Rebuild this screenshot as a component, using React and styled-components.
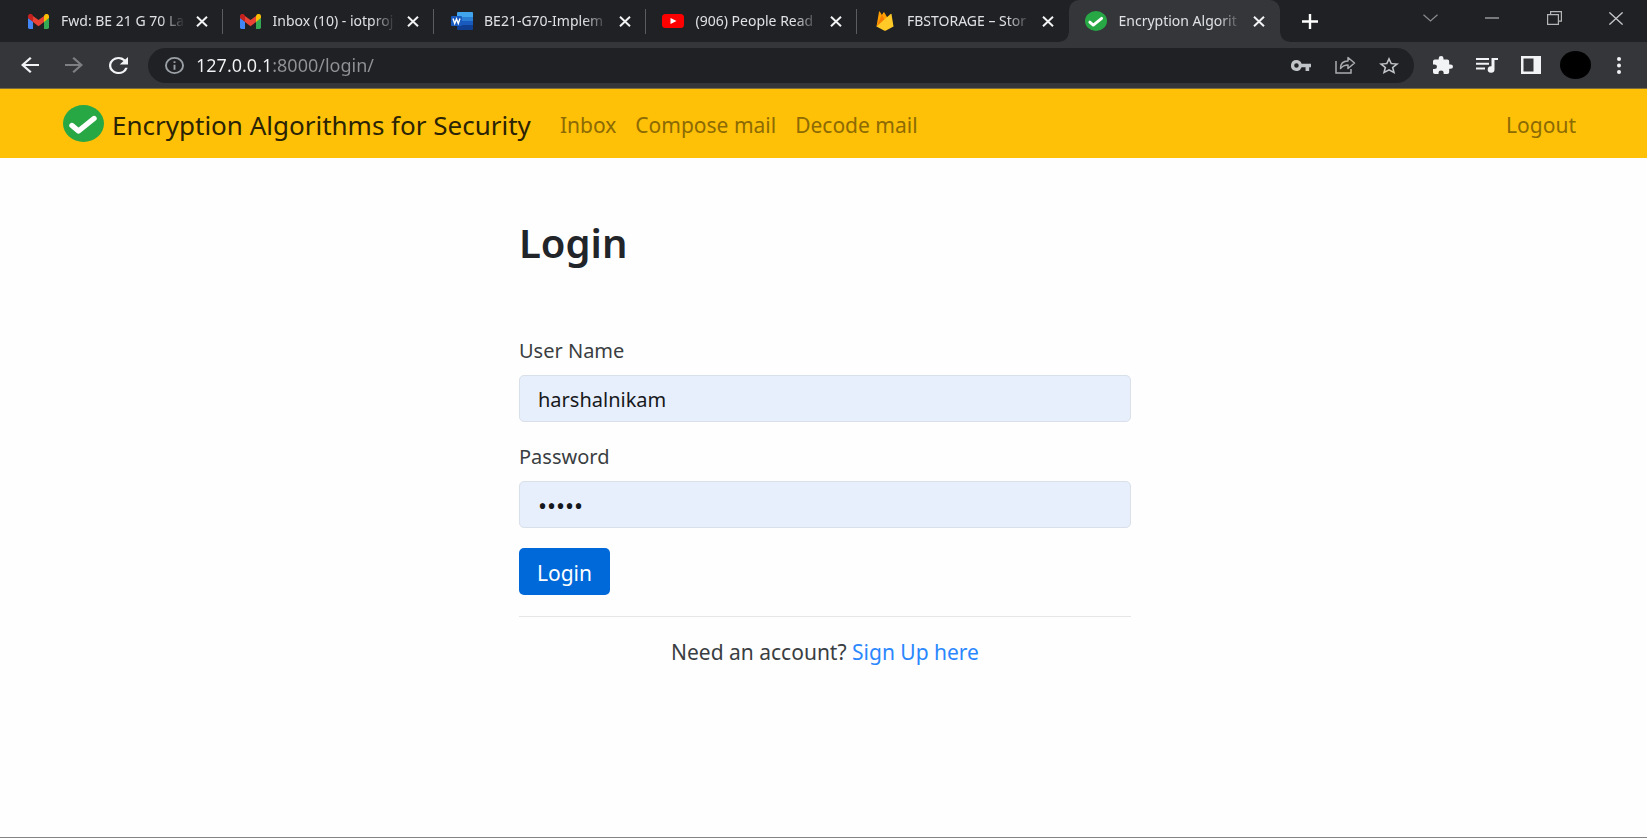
import React from "react";
import styled, { createGlobalStyle, css } from "styled-components";

const GlobalStyle = createGlobalStyle`
  *, *::before, *::after { box-sizing: border-box; }
  body {
    margin: 0;
    background: #fefefe;
    color: #212529;
    font-family: "Noto Sans", "Open Sans", sans-serif;
    font-size: 20px;
    line-height: 30px;
  }
  button, input { font: inherit; }
  button { cursor: pointer; }
`;

const Window = styled.div`
  display: flex;
  flex-direction: column;
  min-height: 100vh;
  border-bottom: 1px solid #848484;
`;

/* Browser frame */

const TabStrip = styled.header`
  display: flex;
  height: 42px;
  padding-left: 11px;
  background: #202124;
`;

const TabList = styled.div`
  display: flex;
  flex: 0 1 1269px;
  min-width: 0;
`;

const Tab = styled.div`
  position: relative;
  display: flex;
  flex: 1 1 0;
  align-items: center;
  min-width: 0;
  padding: 0 10px 0 16px;
  color: #dfe1e5;

  ${(p) =>
    p.$divider &&
    css`
      &::after {
        content: "";
        position: absolute;
        right: 0;
        top: 9px;
        width: 1px;
        height: 25px;
        background: #5a5c60;
      }
    `}

  ${(p) =>
    p.$active &&
    css`
      background: #35363a;
      border-radius: 10px 10px 0 0;
      &::before,
      &::after {
        content: "";
        position: absolute;
        bottom: 0;
        width: 9px;
        height: 9px;
      }
      &::before {
        right: 100%;
        background: radial-gradient(circle at 0 0, transparent 8px, #35363a 9px);
      }
      &::after {
        left: 100%;
        background: radial-gradient(circle at 100% 0, transparent 8px, #35363a 9px);
      }
    `}
`;

const Favicon = styled.span`
  display: flex;
  flex: none;
  justify-content: center;
  width: 23px;
`;

const TabTitle = styled.button`
  flex: 1;
  min-width: 0;
  margin: 0 4px 0 11px;
  padding: 0;
  border: 0;
  overflow: hidden;
  background: none;
  color: inherit;
  font-size: 14px;
  line-height: 20px;
  text-align: left;
  white-space: nowrap;
  mask-image: linear-gradient(90deg, #000 calc(100% - 26px), transparent calc(100% - 2px));
`;

const IconButton = styled.button`
  display: flex;
  flex: none;
  align-items: center;
  justify-content: center;
  width: ${(p) => p.$width || 44}px;
  height: ${(p) => p.$height || 34}px;
  padding: 0;
  border: 0;
  background: none;
  color: ${(p) => p.$color || "#f1f3f4"};
`;

const WindowControls = styled.div`
  display: flex;
  margin-left: auto;
`;

const Toolbar = styled.div`
  display: flex;
  align-items: center;
  height: 47px;
  padding: 0 6px 0 8px;
  background: #35363a;
  border-bottom: 1px solid #7a6a3c;
`;

const Omnibox = styled.div`
  display: flex;
  flex: 1;
  align-items: center;
  height: 35px;
  min-width: 0;
  margin: 0 7px 0 8px;
  padding: 0 3px 0 4px;
  border-radius: 18px;
  background: #202124;
`;

const Address = styled.input`
  flex: 1;
  min-width: 0;
  padding: 0;
  border: 0;
  outline: 0;
  background: linear-gradient(90deg, #f1f3f4 77px, #8f9296 77px);
  background-clip: text;
  color: transparent;
  font-size: 18px;
  line-height: 24px;
`;

const Avatar = styled.span`
  width: 31px;
  height: 28px;
  border-radius: 50%;
  background: #000;
`;

/* Site */

const Navbar = styled.nav`
  display: flex;
  align-items: center;
  height: 69px;
  padding: 0 71px 0 63px;
  background: #ffc107;
`;

const Brand = styled.a`
  display: flex;
  align-items: center;
  gap: 8px;
  margin-right: 29px;
  color: #2b2305;
  font-size: 26px;
  line-height: 36px;
  text-decoration: none;
  white-space: nowrap;
`;

const BrandName = styled.span`
  padding-top: 2px;
`;

const NavLinks = styled.div`
  display: flex;
  flex: 1;
  gap: 19px;
  padding-top: 2px;
  font-size: 21px;
`;

const NavLink = styled.a`
  margin-left: ${(p) => (p.$end ? "auto" : 0)};
  color: #8c6a04;
  text-decoration: none;
  white-space: nowrap;
`;

const Main = styled.main`
  width: 100%;
  max-width: 615px;
  margin: 0 auto;
  padding: 56px 0 0 3px;
`;

const Title = styled.h1`
  margin: 0 0 64px;
  font-size: 40px;
  font-weight: 600;
  line-height: 58px;
`;

const Field = styled.div`
  display: flex;
  flex-direction: column;
  gap: 9px;
  margin-bottom: 20px;
`;

const Label = styled.label`
  color: #3a3e42;
`;

const TextInput = styled.input`
  width: 100%;
  height: 47px;
  padding: 2px 18px 0;
  border: 1px solid #d9e0e9;
  border-radius: 5px;
  outline: 0;
  background: #e8effc;
  color: #16181b;

  &[type="password"] {
    font-size: 24px;
  }
`;

const SubmitButton = styled.button`
  height: 47px;
  padding: 2px 18px 0;
  border: 0;
  border-radius: 5px;
  background: #0069d9;
  color: #fff;
  font-size: 21px;
`;

const Rule = styled.hr`
  margin: 21px 0 20px;
  border: 0;
  border-top: 1px solid #e6e6e6;
`;

const SignUp = styled.p`
  margin: 0;
  color: #3a3e42;
  font-size: 21px;
  text-align: center;

  a {
    color: #2a87ff;
    text-decoration: none;
  }
`;

/* Icons */

const Drawing = styled.svg`
  flex: none;
`;

function Icon({ w, h, box = "0 0 24 24", children, stroke = 0 }) {
  return (
    <Drawing
      width={w}
      height={h}
      viewBox={box}
      preserveAspectRatio="none"
      fill={stroke ? "none" : "currentColor"}
      stroke={stroke ? "currentColor" : "none"}
      strokeWidth={stroke || undefined}
      aria-hidden="true"
    >
      {children}
    </Drawing>
  );
}

const Gmail = () => (
  <Icon w={21} h={15} box="0 0 21 15">
    <path fill="#4285f4" d="M0 4v9.600Q0 15 1.500 15H5V7z" />
    <path fill="#34a853" d="M16 7v8h3.500q1.500 0 1.500-1.400V4z" />
    <path fill="#fbbc04" d="M16 2v6l5-4V2.500C21 0 18.400-.8 16.600.7z" />
    <path fill="#ea4335" d="M5 8V2l5.500 4L16 2v6l-5.500 4.200z" />
    <path fill="#c5221f" d="M0 2.500V4l5 4V2L4.400.7C2.600-.8 0 0 0 2.500z" />
  </Icon>
);

const Word = () => (
  <Icon w={22} h={18} box="0 0 22 18">
    <path fill="#41a5ee" d="M6 1q0-1 1-1h14q1 0 1 1v4H6z" />
    <path fill="#2b7cd3" d="M6 5h16v4H6z" />
    <path fill="#185abd" d="M6 9h16v4H6z" />
    <path fill="#103f91" d="M6 13h16v4q0 1-1 1H7q-1 0-1-1z" />
    <rect y="4" width="11" height="10" rx="1" fill="#185abd" />
    <path fill="none" stroke="#fff" strokeWidth="1.400" d="M2 6.500 3.700 11.500 5.500 7l1.800 4.500L9 6.500" />
  </Icon>
);

const Youtube = () => (
  <Icon w={22} h={14} box="0 0 22 14">
    <rect width="22" height="14" rx="3.500" fill="#f00" />
    <path fill="#fff" d="M8.500 4v6l6-3z" />
  </Icon>
);

const Firebase = () => (
  <Icon w={18} h={20} box="0 0 18 20">
    <path fill="#ffa000" d="M.5 15.500 3 .7q.3-.9.900 0l2 3.300L7.400 1.600q.5-.7 1 0L15 13z" />
    <path fill="#f57c00" d="M.5 15.500 5.900 4l3.600 6z" />
    <path fill="#ffca28" d="M.5 15.500 14.600 3q.7-.6.900.3L17.500 15.500 10 19.500q-1 .5-2 0z" />
  </Icon>
);

const Check = ({ w, h }) => (
  <Icon w={w} h={h} box="0 0 41 37">
    <ellipse cx="20.500" cy="18.500" rx="20.500" ry="18.500" fill="#28a745" />
    <path
      d="M9 20.500 15.500 26 31 13.500"
      fill="none"
      stroke="#fff"
      strokeWidth="5.400"
      strokeLinecap="round"
      strokeLinejoin="round"
    />
  </Icon>
);

const CloseMark = () => (
  <Icon w={12} h={11} box="0 0 12 11" stroke={2}>
    <path d="M1 .8 11 10.200M11 .8 1 10.200" />
  </Icon>
);

const tabs = [
  { title: "Fwd: BE 21 G 70 La", icon: <Gmail /> },
  { title: "Inbox (10) - iotproj", icon: <Gmail /> },
  { title: "BE21-G70-Implem", icon: <Word /> },
  { title: "(906) People Read", icon: <Youtube /> },
  { title: "FBSTORAGE – Stor", icon: <Firebase /> },
  { title: "Encryption Algorit", icon: <Check w={22} h={20} />, active: true },
];

function BrowserFrame() {
  return (
    <>
      <TabStrip>
        <TabList>
          {tabs.map((tab, i) => (
            <Tab key={tab.title} $active={tab.active} $divider={i < 4}>
              <Favicon>{tab.icon}</Favicon>
              <TabTitle>{tab.title}</TabTitle>
              <IconButton $width={22} $height={22} aria-label="Close tab">
                <CloseMark />
              </IconButton>
            </Tab>
          ))}
        </TabList>
        <IconButton $width={60} $height={42} $color="#fff" aria-label="New tab">
          <Icon w={16} h={15} box="0 0 16 15" stroke={2.4}>
            <path d="M8 0v15M0 7.500h16" />
          </Icon>
        </IconButton>
        <WindowControls>
          <IconButton $width={62} $height={36} $color="#8a8c8f" aria-label="Search tabs">
            <Icon w={15} h={8} box="0 0 15 8" stroke={1.2}>
              <path d="M.5.8 7.500 7 14.500.8" />
            </Icon>
          </IconButton>
          <IconButton $width={62} $height={36} $color="#b4b5b7" aria-label="Minimize">
            <Icon w={14} h={2} box="0 0 14 2" stroke={1.2}>
              <path d="M0 1h14" />
            </Icon>
          </IconButton>
          <IconButton $width={62} $height={36} $color="#b4b5b7" aria-label="Restore">
            <Icon w={15} h={14} box="0 0 15 14" stroke={1.2}>
              <path d="M.6 3.600h10.800v9.800H.6zM3.600 3.500V.6h10.800v9.600h-3" />
            </Icon>
          </IconButton>
          <IconButton $width={62} $height={36} $color="#c4c5c7" aria-label="Close window">
            <Icon w={14} h={13} box="0 0 14 13" stroke={1.3}>
              <path d="M.4.4l13.200 12.200M13.600.4.4 12.600" />
            </Icon>
          </IconButton>
        </WindowControls>
      </TabStrip>
      <Toolbar>
        <IconButton aria-label="Back">
          <Icon w={18} h={16} box="4 4 16 16">
            <path d="M20 11H7.830l5.590-5.590L12 4l-8 8 8 8 1.410-1.410L7.830 13H20z" />
          </Icon>
        </IconButton>
        <IconButton $color="#7d7f83" aria-label="Forward">
          <Icon w={18} h={16} box="4 4 16 16">
            <path d="m12 4-1.410 1.410L16.170 11H4v2h12.170l-5.580 5.590L12 20l8-8z" />
          </Icon>
        </IconButton>
        <IconButton aria-label="Reload">
          <Icon w={19} h={17} box="4 4 16 16">
            <path d="M17.650 6.350A7.958 7.958 0 0 0 12 4a8 8 0 1 0 7.730 10h-2.080A5.990 5.990 0 0 1 12 18a6 6 0 1 1 4.220-10.220L13 11h7V4z" />
          </Icon>
        </IconButton>
        <Omnibox>
          <IconButton $color="#9aa0a6" aria-label="View site information">
            <Icon w={19} h={17} box="2 2 20 20">
              <path d="M11 7h2v2h-2zm0 4h2v6h-2zm1-9a10 10 0 1 0 0 20 10 10 0 0 0 0-20zm0 18a8 8 0 1 1 0-16 8 8 0 0 1 0 16z" />
            </Icon>
          </IconButton>
          <Address aria-label="Address" defaultValue="127.0.0.1:8000/login/" />
          <IconButton $color="#c0c3c7" aria-label="Manage passwords">
            <Icon w={20} h={11} box="1 6 22 12">
              <path d="M12.650 10A5.990 5.990 0 0 0 7 6a6 6 0 1 0 5.650 8H17v4h4v-4h2v-4zM7 14.500a2.500 2.500 0 1 1 0-5 2.500 2.500 0 0 1 0 5z" />
            </Icon>
          </IconButton>
          <IconButton $color="#a9acb0" aria-label="Share this page">
            <Icon w={21} h={18} box="0 0 21 18" stroke={1.5}>
              <path d="M1 5v12h15v-4" />
              <path d="M5.500 12.500C5.500 7.500 8.500 5 13 5V1.500l6.500 5.500-6.500 5.500V9C9.500 9 7.500 10 5.500 12.500z" strokeLinejoin="round" />
            </Icon>
          </IconButton>
          <IconButton $color="#c0c3c7" aria-label="Bookmark this tab">
            <Icon w={20} h={17} box="2 2 20 19">
              <path d="m22 9.240-7.190-.62L12 2 9.190 8.630 2 9.240l5.460 4.730L5.820 21 12 17.270 18.180 21l-1.630-7.030zM12 15.400l-3.760 2.270 1-4.280-3.320-2.880 4.380-.38L12 6.100l1.710 4.040 4.380.38-3.320 2.880 1 4.280z" />
            </Icon>
          </IconButton>
        </Omnibox>
        <IconButton aria-label="Extensions">
          <Icon w={20} h={18} box="2 1 21 21">
            <path d="M20.500 11H19V7a2 2 0 0 0-2-2h-4V3.500a2.500 2.500 0 0 0-5 0V5H4a2 2 0 0 0-1.990 2v3.800H3.500a2.700 2.700 0 0 1 0 5.400H2V20a2 2 0 0 0 2 2h3.800v-1.500a2.700 2.700 0 0 1 5.400 0V22H17a2 2 0 0 0 2-2v-4h1.500a2.500 2.500 0 0 0 0-5z" />
          </Icon>
        </IconButton>
        <IconButton aria-label="Media controls">
          <Icon w={22} h={16} box="0 0 22 16">
            <path d="M0 1h13v2H0zm0 4.700h13v2H0zm0 4.700h9v2H0zM15.500 1H22v2h-3.500v9.500a3.400 3.200 0 1 1-3-3.200z" />
          </Icon>
        </IconButton>
        <IconButton aria-label="Side panel">
          <Icon w={20} h={18} box="0 0 20 18">
            <path fillRule="evenodd" d="M0 0h20v18H0zM2.500 2.500v13h10v-13z" />
          </Icon>
        </IconButton>
        <IconButton aria-label="Profile">
          <Avatar />
        </IconButton>
        <IconButton aria-label="Menu">
          <Icon w={4} h={17} box="0 0 4 17">
            <ellipse cx="2" cy="2" rx="2" ry="1.900" />
            <ellipse cx="2" cy="8.500" rx="2" ry="1.900" />
            <ellipse cx="2" cy="15" rx="2" ry="1.900" />
          </Icon>
        </IconButton>
      </Toolbar>
    </>
  );
}

export default function App() {
  return (
    <Window>
      <GlobalStyle />
      <BrowserFrame />
      <Navbar>
        <Brand href="#home">
          <Check w={41} h={37} />
          <BrandName>Encryption Algorithms for Security</BrandName>
        </Brand>
        <NavLinks>
          <NavLink href="#inbox">Inbox</NavLink>
          <NavLink href="#compose">Compose mail</NavLink>
          <NavLink href="#decode">Decode mail</NavLink>
          <NavLink href="#logout" $end>Logout</NavLink>
        </NavLinks>
      </Navbar>
      <Main>
        <Title>Login</Title>
        <form onSubmit={(e) => e.preventDefault()}>
          <Field>
            <Label htmlFor="username">User Name</Label>
            <TextInput id="username" type="text" defaultValue="harshalnikam" />
          </Field>
          <Field>
            <Label htmlFor="password">Password</Label>
            <TextInput id="password" type="password" defaultValue="12345" />
          </Field>
          <SubmitButton type="submit">Login</SubmitButton>
        </form>
        <Rule />
        <SignUp>
          Need an account? <a href="#signup">Sign Up here</a>
        </SignUp>
      </Main>
    </Window>
  );
}
